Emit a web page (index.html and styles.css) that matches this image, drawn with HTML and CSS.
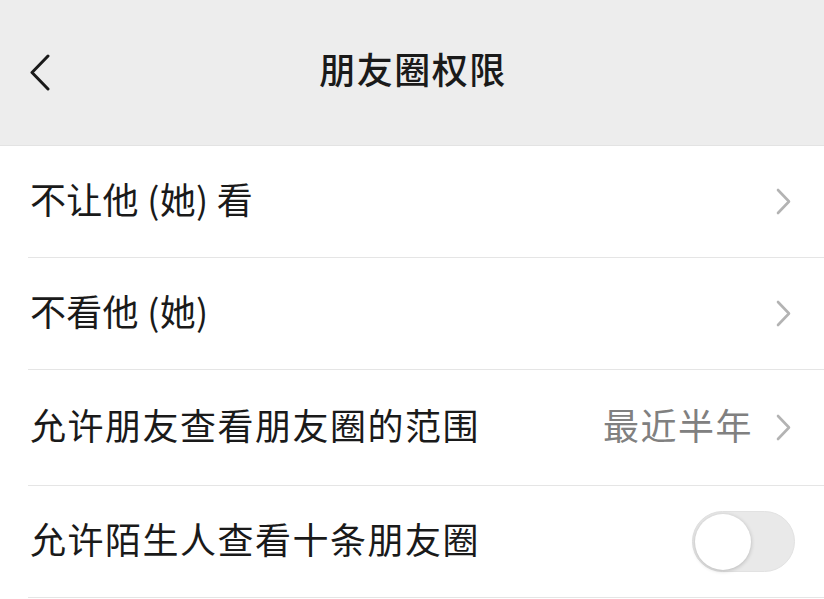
FILE: index.html
```html
<!DOCTYPE html>
<html lang="zh-CN">
<head>
<meta charset="utf-8">
<title>朋友圈权限</title>
<link rel="stylesheet" href="styles.css">
</head>
<body>
<header class="navbar">
  <div class="nav-left">
    <svg class="back" width="22" height="38" viewBox="0 0 22 38"><polyline points="19,3 3,19.5 19,36" fill="none" stroke="#1a1a1a" stroke-width="3" stroke-linecap="round" stroke-linejoin="round"/></svg>
  </div>
  <h1 class="title">朋友圈权限</h1>
  <div class="nav-right"></div>
</header>
<main class="list">
  <div class="row">
    <span class="label label-mixed">不让他 (她) 看</span>
    <svg class="arrow" width="16" height="27" viewBox="0 0 16 27"><polyline points="2,2 13,13.5 2,25" fill="none" stroke="#b3b3b3" stroke-width="2.6" stroke-linecap="round" stroke-linejoin="round"/></svg>
  </div>
  <div class="row">
    <span class="label label-mixed">不看他 (她)</span>
    <svg class="arrow" width="16" height="27" viewBox="0 0 16 27"><polyline points="2,2 13,13.5 2,25" fill="none" stroke="#b3b3b3" stroke-width="2.6" stroke-linecap="round" stroke-linejoin="round"/></svg>
  </div>
  <div class="row row-tall">
    <span class="label">允许朋友查看朋友圈的范围</span>
    <span class="value">最近半年</span>
    <svg class="arrow" width="16" height="27" viewBox="0 0 16 27"><polyline points="2,2 13,13.5 2,25" fill="none" stroke="#b3b3b3" stroke-width="2.6" stroke-linecap="round" stroke-linejoin="round"/></svg>
  </div>
  <div class="row row-switch">
    <span class="label">允许陌生人查看十条朋友圈</span>
    <span class="switch"><span class="knob"></span></span>
  </div>
</main>
</body>
</html>
```

FILE: styles.css
```css
* { box-sizing: border-box; }
html, body {
  margin: 0;
  padding: 0;
  background: #ffffff;
  font-family: "Noto Sans CJK SC", "Noto Sans", sans-serif;
  color: #1a1a1a;
}
.navbar {
  height: 146px;
  background: #ededed;
  display: grid;
  grid-template-columns: 1fr auto 1fr;
  align-items: center;
  border-bottom: 1px solid #e3e3e3;
}
.nav-left {
  padding-left: 29px;
  display: flex;
  align-items: center;
  padding-bottom: 2px;
}
.back { display: block; }
.title {
  margin: 0;
  font-size: 36px;
  font-weight: 500;
  line-height: 1;
  letter-spacing: 1.5px;
  padding-bottom: 10px;
  padding-left: 2px;
}
.list {
  display: flex;
  flex-direction: column;
}
.row {
  height: 112px;
  margin-left: 28px;
  padding-left: 2px;
  padding-right: 32px;
  display: flex;
  align-items: center;
  border-bottom: 1px solid #e5e5e5;
}
.row-tall { height: 116px; }
.label {
  flex: 1;
  font-size: 36px;
  line-height: 1;
  letter-spacing: 1.5px;
  white-space: nowrap;
  padding-bottom: 7px;
}
.label-mixed { letter-spacing: 0.3px; }
.value {
  font-size: 36px;
  line-height: 1;
  letter-spacing: 1.5px;
  color: #808080;
  margin-right: 23px;
  padding-bottom: 7px;
}
.arrow { display: block; }
.row-switch { padding-right: 29px; }
.switch {
  width: 103px;
  height: 61px;
  border-radius: 31px;
  background: #e9e9e9;
  border: 1px solid #e2e2e2;
  display: flex;
  align-items: center;
  padding-left: 2px;
}
.knob {
  width: 56px;
  height: 56px;
  border-radius: 50%;
  background: #ffffff;
  box-shadow: 0 1px 4px rgba(0,0,0,0.22);
}
```
